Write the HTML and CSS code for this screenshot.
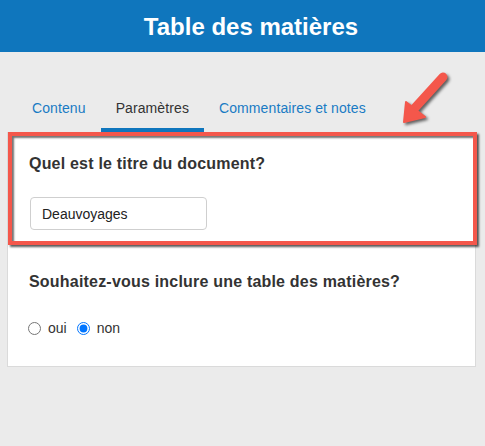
FILE: index.html
```html
<!DOCTYPE html>
<html lang="fr">
<head>
<meta charset="utf-8">
<title>Table des matières</title>
<link rel="stylesheet" href="styles.css">
</head>
<body>
<header class="topbar">
  <h1 class="topbar-title">Table des matières</h1>
</header>
<main class="page">
  <nav class="tabs">
    <a class="tab">Contenu</a>
    <a class="tab tab-active">Paramètres</a>
    <a class="tab">Commentaires et notes</a>
  </nav>
  <div class="card">
    <section class="field field-first">
      <h2 class="field-label">Quel est le titre du document?</h2>
      <input class="text-input" type="text" value="Deauvoyages">
      <div class="highlight"></div>
    </section>
    <section class="field field-second">
      <h2 class="field-label">Souhaitez-vous inclure une table des matières?</h2>
      <div class="radios">
        <label class="radio"><input type="radio" name="toc"><span>oui</span></label>
        <label class="radio"><input type="radio" name="toc" checked><span>non</span></label>
      </div>
    </section>
  </div>
  <svg class="arrow" width="60" height="70" viewBox="0 0 60 70">
    <line x1="48" y1="15" x2="18" y2="48" stroke="#f4574b" stroke-width="9" stroke-linecap="round"/>
    <polygon points="9,60 11,40 30,55" fill="#f4574b" stroke="#f4574b" stroke-width="2" stroke-linejoin="round"/>
  </svg>
</main>
</body>
</html>
```
FILE: styles.css
```css
* { box-sizing: border-box; }

html, body {
  margin: 0;
  padding: 0;
  background: #ebebeb;
  font-family: "Liberation Sans", Arial, sans-serif;
  color: #333;
}

.topbar {
  height: 52px;
  background: #0f76bd;
  display: flex;
  align-items: center;
  justify-content: center;
  padding-left: 17px;
}

.topbar-title {
  margin: 0;
  color: #fff;
  font-size: 24px;
  font-weight: bold;
  line-height: 28px;
  padding-top: 1px;
}

.page {
  position: relative;
  padding: 0 9px 0 7px;
}

.tabs {
  display: flex;
  padding: 36px 0 0 10px;
}

.tab {
  display: block;
  font-size: 14px;
  line-height: 20px;
  letter-spacing: 0.1px;
  padding: 10px 15px 10px;
  border-bottom: 4px solid transparent;
  color: #1a7bc4;
  cursor: pointer;
}

.tab-active {
  color: #333;
  border-bottom-color: #0f76bd;
}

.card {
  background: #fff;
  border: 1px solid #dadada;
  border-top: 0;
}

.field {
  position: relative;
  padding-left: 21px;
  padding-right: 20px;
}

.field-first {
  padding-top: 22px;
  padding-bottom: 15px;
}

.field-second {
  padding-top: 27px;
  padding-bottom: 28px;
}

.field-label {
  margin: 0;
  font-size: 16px;
  line-height: 20px;
  font-weight: bold;
  letter-spacing: 0.2px;
  color: #333;
}

.text-input {
  display: block;
  margin: 23px 0 0 1px;
  width: 177px;
  height: 33px;
  border: 1px solid #cfcfcf;
  border-radius: 4px;
  padding: 0 11px;
  font-family: "Liberation Sans", Arial, sans-serif;
  font-size: 14px;
  color: #222;
  background: #fff;
  outline: none;
}

.highlight {
  position: absolute;
  left: 0;
  right: -2px;
  top: 0;
  bottom: 0;
  border: 4px solid #f4574b;
  box-shadow: 2px 2px 2px rgba(0, 0, 0, 0.65), inset 2px 2px 2px rgba(0, 0, 0, 0.55);
  pointer-events: none;
}

.radios {
  display: flex;
  align-items: center;
  margin-top: 26px;
  margin-left: -1px;
  height: 20px;
}

.radio {
  display: flex;
  align-items: center;
  font-size: 14px;
  line-height: 20px;
  color: #333;
  margin-right: 10px;
}

.radio input {
  margin: 0 7px 0 0;
  width: 13px;
  height: 13px;
}

.arrow {
  position: absolute;
  left: 395px;
  top: 10px;
  overflow: visible;
  filter: drop-shadow(2px 2px 1.5px rgba(0, 0, 0, 0.6));
}
```
